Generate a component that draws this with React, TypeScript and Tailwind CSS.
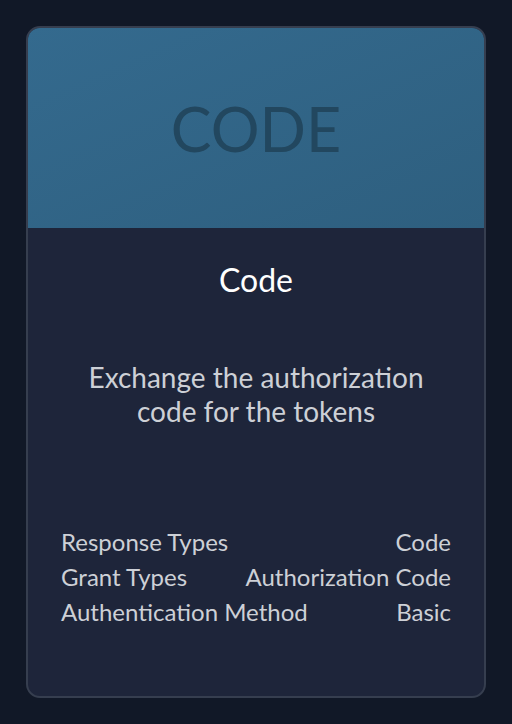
const details = [
  { label: 'Response Types', value: 'Code' },
  { label: 'Grant Types', value: 'Authorization Code' },
  { label: 'Authentication Method', value: 'Basic' },
];

export default function App() {
  return (
    <div className="min-h-screen bg-[#111827] p-[26px] font-['Lato',sans-serif]">
      <div className="flex h-[672px] flex-col overflow-hidden rounded-[14px] border-2 border-[#363e4f] bg-[#1e253a]">
        <div className="flex h-[200px] items-center justify-center bg-gradient-to-br from-[#346a8e] to-[#2e5f7f]">
          <span className="text-[61px] leading-none text-[#22475f]">CODE</span>
        </div>
        <div className="flex flex-1 flex-col px-[33px] text-center">
          <h2 className="mt-[35px] text-[32px] leading-[34px] text-white">Code</h2>
          <p className="mt-[63px] text-[28px] leading-[34px] text-[#cdd0d6]">
            Exchange the authorization
            <br />
            code for the tokens
          </p>
          <div className="mt-[96px] flex flex-col text-[24px] leading-[35px] text-[#cdd0d6]">
            {details.map((d) => (
              <div key={d.label} className="flex justify-between">
                <span>{d.label}</span>
                <span>{d.value}</span>
              </div>
            ))}
          </div>
        </div>
      </div>
    </div>
  );
}
